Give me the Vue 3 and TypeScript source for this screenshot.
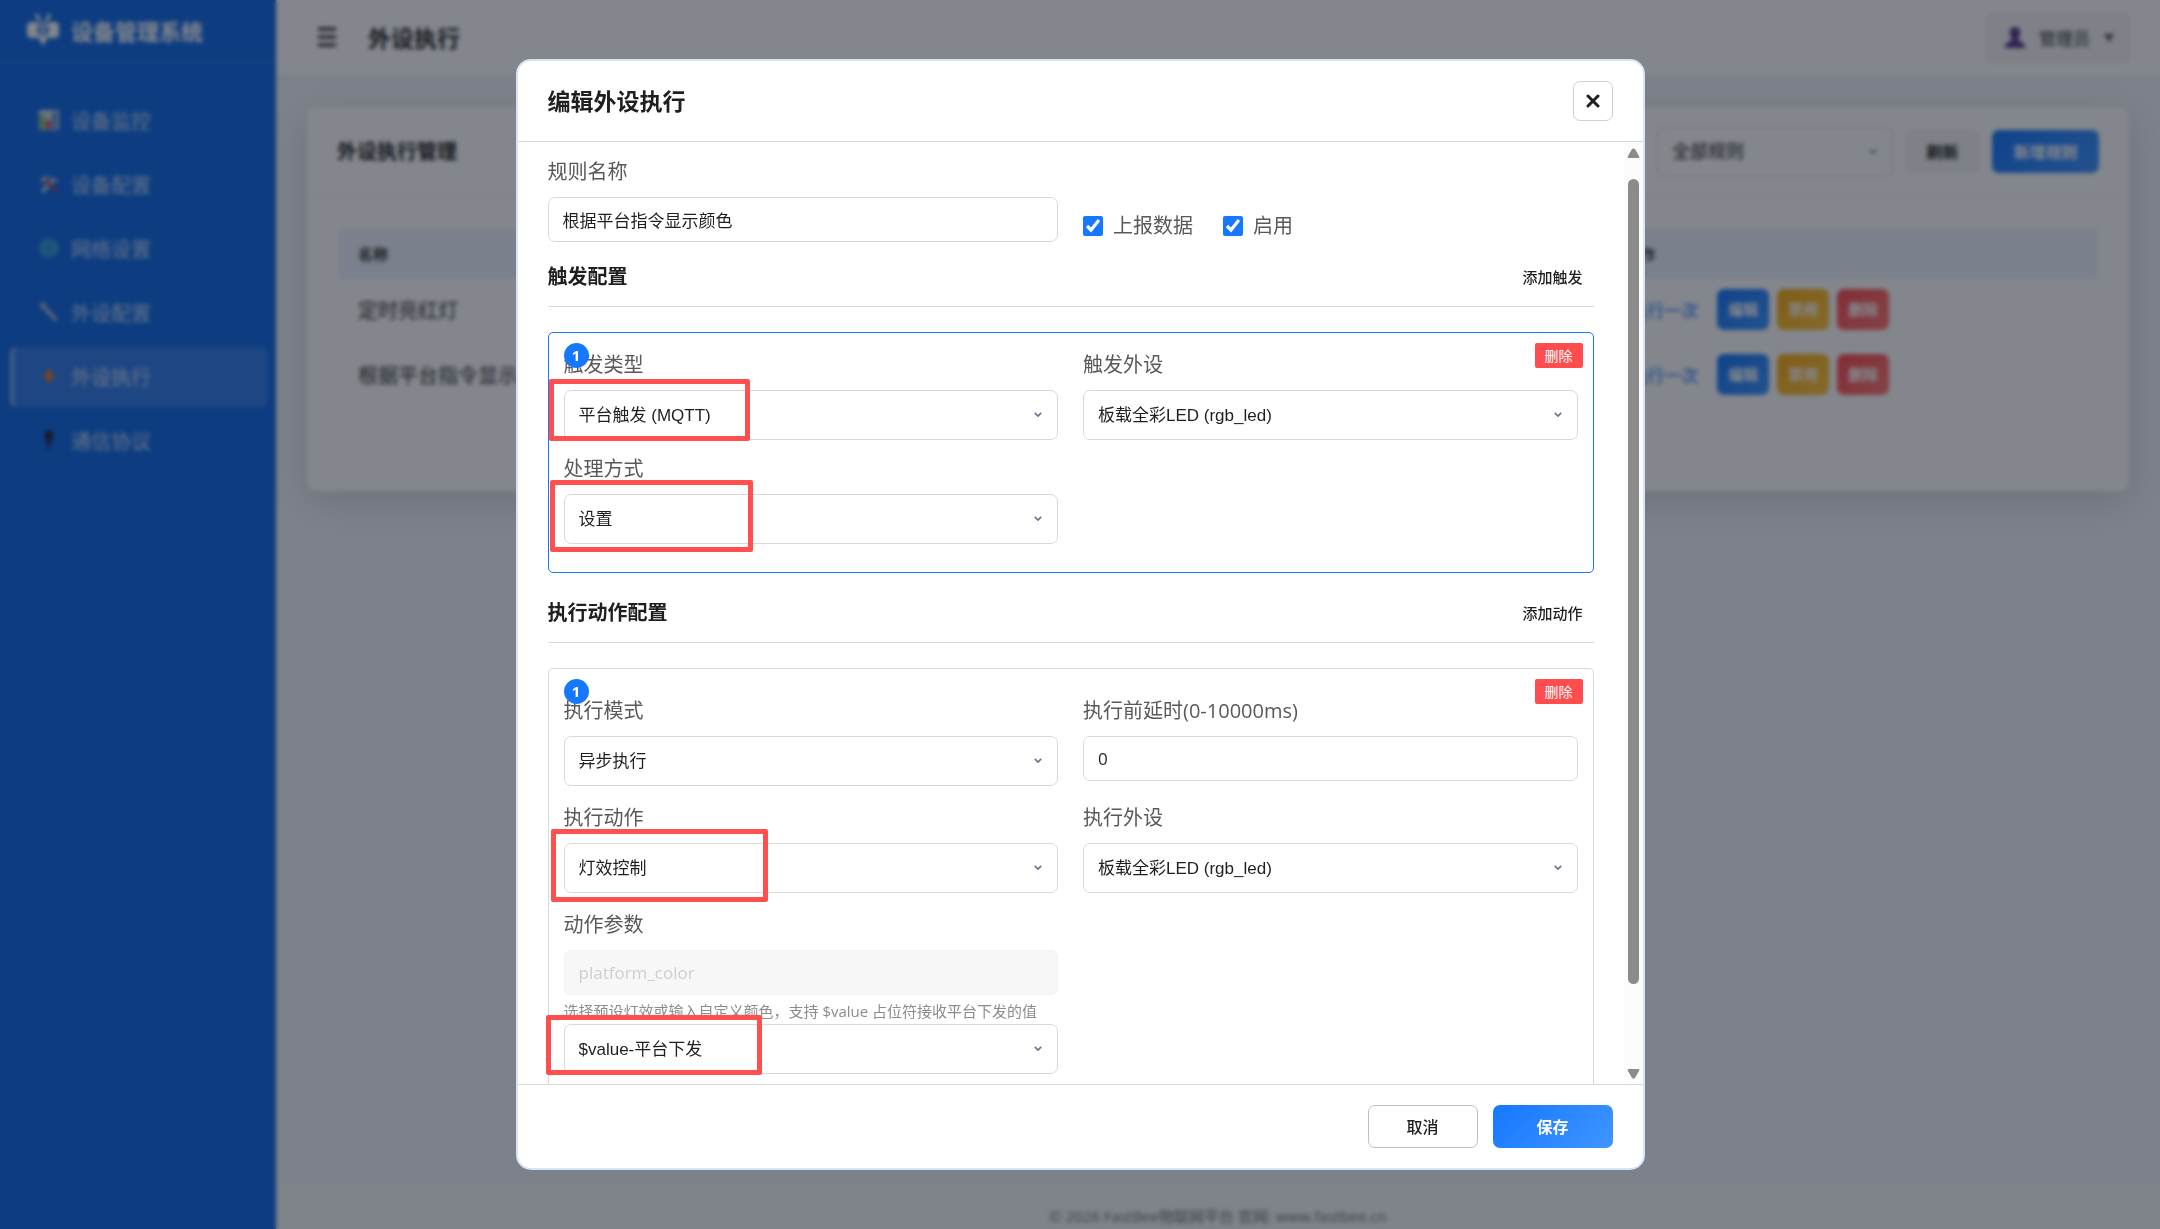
<script setup lang="ts">
import { ref } from 'vue'

interface MenuItem {
  key: string
  label: string
}

const menu: MenuItem[] = [
  { key: 'monitor', label: '设备监控' },
  { key: 'device', label: '设备配置' },
  { key: 'network', label: '网络设置' },
  { key: 'periph', label: '外设配置' },
  { key: 'exec', label: '外设执行' },
  { key: 'protocol', label: '通信协议' },
]
const activeKey = ref('exec')

const rules = ref([
  { id: 1, name: '定时亮红灯' },
  { id: 2, name: '根据平台指令显示颜色' },
])

const filter = ref('全部规则')
const ruleName = ref('根据平台指令显示颜色')
const reportData = ref(true)
const enabled = ref(true)
const triggerType = ref('平台触发 (MQTT)')
const triggerDevice = ref('板载全彩LED (rgb_led)')
const handleMode = ref('设置')
const execMode = ref('异步执行')
const delayMs = ref('0')
const actionType = ref('灯效控制')
const actionDevice = ref('板载全彩LED (rgb_led)')
const actionParam = ref('platform_color')
const actionValue = ref('$value-平台下发')
</script>

<template>
  <div class="app">
    <aside class="sidebar">
      <div class="brand">
        <svg class="brand-icon" viewBox="0 0 32 34" aria-hidden="true">
          <path d="M9 1l4 7M23 1l-4 7" stroke="#fff" stroke-width="3" fill="none" />
          <path d="M0 14q0-5 4-5h5l2 2q5-4 10 0l2-2h5q4 0 4 5v6q0 5-4 5h-5l-2-1-5 9-5-9-2 1H4q-4 0-4-5z" fill="#fff" />
          <circle cx="16" cy="17" r="5" fill="none" stroke="#1268e2" stroke-width="2" />
          <path d="M12 17h8" stroke="#1268e2" stroke-width="2" />
        </svg>
        <span>设备管理系统</span>
      </div>
      <nav class="menu">
        <a
          v-for="item in menu"
          :key="item.key"
          href="#"
          class="menu-item"
          :class="{ active: item.key === activeKey }"
          @click.prevent="activeKey = item.key"
        >
          <svg class="menu-icon" viewBox="0 0 20 20" aria-hidden="true">
            <template v-if="item.key === 'monitor'">
              <rect width="20" height="20" rx="1" fill="#d6dce4" />
              <rect x="1" y="5" width="5" height="14" fill="#6fc26a" />
              <rect x="7" y="10" width="5" height="9" fill="#e0436a" />
              <rect x="13" y="2" width="5" height="17" fill="#4f96d8" />
            </template>
            <template v-else-if="item.key === 'device'">
              <path d="M3 18L15 5" stroke="#c5ccd8" stroke-width="4" />
              <path d="M5 5l13 13" stroke="#b5484f" stroke-width="3" />
              <path d="M1 6l6-5 3 3-6 5z" fill="#b3bac6" />
              <path d="M12 3l3 4 4-1" stroke="#c5ccd8" stroke-width="2" fill="none" />
            </template>
            <template v-else-if="item.key === 'network'">
              <circle cx="10" cy="10" r="10" fill="#35a4e0" />
              <path d="M0 10h20M10 0v20M3 4q7 5 14 0M3 16q7-5 14 0" stroke="#2a83c8" fill="none" />
            </template>
            <template v-else-if="item.key === 'periph'">
              <path d="M4 4l12 13" stroke="#b6bfd0" stroke-width="4" stroke-linecap="round" />
              <path d="M1 5l5-4" stroke="#b6bfd0" stroke-width="3" />
            </template>
            <template v-else-if="item.key === 'exec'">
              <path d="M11 0L4 12h5l-1 8 8-12h-5z" fill="#ff7a1a" />
            </template>
            <template v-else>
              <path d="M6 1h8v7l-2 5h-1v7H9v-7H8L6 8z" fill="#2a2440" />
            </template>
          </svg>
          <span>{{ item.label }}</span>
        </a>
      </nav>
    </aside>

    <div class="main">
      <header class="topbar">
        <button class="burger" type="button" aria-label="菜单">
          <svg viewBox="0 0 18 22" width="18" height="22" aria-hidden="true">
            <path d="M0 3h18M0 11h18M0 19h18" stroke="#222" stroke-width="3" />
          </svg>
        </button>
        <h1>外设执行</h1>
        <button class="user" type="button">
          <svg viewBox="0 0 20 22" width="20" height="22" aria-hidden="true">
            <path d="M10 0c4 0 6 3 5 7q-1 4-2 6l5 3q2 1 2 5H0q0-4 2-5l5-3q-1-2-2-6c-1-4 1-7 5-7z" fill="#5b3a8e" />
          </svg>
          <span>管理员</span>
          <svg viewBox="0 0 10 8" width="10" height="8" aria-hidden="true"><path d="M0 0h10L5 8z" fill="#555" /></svg>
        </button>
      </header>

      <section class="card">
        <div class="card-head">
          <h2>外设执行管理</h2>
          <div class="card-tools">
            <div class="filter">
              <select v-model="filter" aria-label="规则筛选">
                <option>全部规则</option>
              </select>
              <svg class="chevron" viewBox="0 0 10 6" aria-hidden="true"><path d="M1 1l4 4 4-4" /></svg>
            </div>
            <button class="btn-refresh" type="button">刷新</button>
            <button class="btn-new" type="button">新增规则</button>
          </div>
        </div>
        <table class="rules">
          <thead>
            <tr>
              <th>名称</th>
              <th class="col-ops">操作</th>
            </tr>
          </thead>
          <tbody>
            <tr v-for="rule in rules" :key="rule.id">
              <td>{{ rule.name }}</td>
              <td>
                <div class="ops">
                  <button class="op-link" type="button">执行一次</button>
                  <button class="op op-edit" type="button">编辑</button>
                  <button class="op op-stop" type="button">禁用</button>
                  <button class="op op-del" type="button">删除</button>
                </div>
              </td>
            </tr>
          </tbody>
        </table>
      </section>

      <footer class="page-foot">© 2026 FastBee物联网平台 官网: www.fastbee.cn</footer>
    </div>

    <div class="overlay">
      <div class="modal" role="dialog" aria-labelledby="modal-title">
        <div class="modal-head">
          <h2 id="modal-title">编辑外设执行</h2>
          <button class="close" type="button" aria-label="关闭">
            <svg viewBox="0 0 14 14" width="14" height="14" aria-hidden="true">
              <path d="M2 2l10 10M12 2L2 12" stroke="#1f1f1f" stroke-width="3" stroke-linecap="round" />
            </svg>
          </button>
        </div>

        <div class="modal-mid">
          <form class="modal-body" @submit.prevent>
            <div class="grid">
              <div class="field">
                <label for="rule-name">规则名称</label>
                <input id="rule-name" v-model="ruleName" class="input" type="text" />
              </div>
              <div class="checks">
                <label class="check"><input v-model="reportData" type="checkbox" />上报数据</label>
                <label class="check"><input v-model="enabled" type="checkbox" />启用</label>
              </div>
            </div>

            <div class="section-head first">
              <h3>触发配置</h3>
              <button type="button">添加触发</button>
            </div>
            <div class="group active">
              <span class="badge">1</span>
              <button class="remove" type="button">删除</button>
              <div class="grid">
                <div class="field">
                  <label for="trigger-type">触发类型</label>
                  <div class="control">
                    <select id="trigger-type" v-model="triggerType"><option>平台触发 (MQTT)</option></select>
                    <svg class="chevron" viewBox="0 0 10 6" aria-hidden="true"><path d="M1 1l4 4 4-4" /></svg>
                    <span class="mark mark-type"></span>
                  </div>
                </div>
                <div class="field">
                  <label for="trigger-device">触发外设</label>
                  <div class="control">
                    <select id="trigger-device" v-model="triggerDevice"><option>板载全彩LED (rgb_led)</option></select>
                    <svg class="chevron" viewBox="0 0 10 6" aria-hidden="true"><path d="M1 1l4 4 4-4" /></svg>
                  </div>
                </div>
                <div class="field">
                  <label for="handle-mode">处理方式</label>
                  <div class="control">
                    <select id="handle-mode" v-model="handleMode"><option>设置</option></select>
                    <svg class="chevron" viewBox="0 0 10 6" aria-hidden="true"><path d="M1 1l4 4 4-4" /></svg>
                    <span class="mark mark-mode"></span>
                  </div>
                </div>
              </div>
            </div>

            <div class="section-head">
              <h3>执行动作配置</h3>
              <button type="button">添加动作</button>
            </div>
            <div class="group roomy">
              <span class="badge">1</span>
              <button class="remove" type="button">删除</button>
              <div class="grid">
                <div class="field">
                  <label for="exec-mode">执行模式</label>
                  <div class="control">
                    <select id="exec-mode" v-model="execMode"><option>异步执行</option></select>
                    <svg class="chevron" viewBox="0 0 10 6" aria-hidden="true"><path d="M1 1l4 4 4-4" /></svg>
                  </div>
                </div>
                <div class="field">
                  <label for="delay">执行前延时(0-10000ms)</label>
                  <input id="delay" v-model="delayMs" class="input" type="text" inputmode="numeric" />
                </div>
                <div class="field">
                  <label for="action-type">执行动作</label>
                  <div class="control">
                    <select id="action-type" v-model="actionType"><option>灯效控制</option></select>
                    <svg class="chevron" viewBox="0 0 10 6" aria-hidden="true"><path d="M1 1l4 4 4-4" /></svg>
                    <span class="mark mark-action"></span>
                  </div>
                </div>
                <div class="field">
                  <label for="action-device">执行外设</label>
                  <div class="control">
                    <select id="action-device" v-model="actionDevice"><option>板载全彩LED (rgb_led)</option></select>
                    <svg class="chevron" viewBox="0 0 10 6" aria-hidden="true"><path d="M1 1l4 4 4-4" /></svg>
                  </div>
                </div>
                <div class="field">
                  <label for="action-param">动作参数</label>
                  <input id="action-param" v-model="actionParam" class="input" type="text" disabled />
                  <p class="hint">选择预设灯效或输入自定义颜色，支持 $value 占位符接收平台下发的值</p>
                  <div class="control">
                    <select v-model="actionValue" aria-label="动作参数预设"><option>$value-平台下发</option></select>
                    <svg class="chevron" viewBox="0 0 10 6" aria-hidden="true"><path d="M1 1l4 4 4-4" /></svg>
                    <span class="mark mark-value"></span>
                  </div>
                </div>
              </div>
            </div>
          </form>
          <div class="scrollbar" aria-hidden="true">
            <svg viewBox="0 0 13 10" width="13" height="10"><path d="M5 1q1-1 3 0l4 7q1 2-1 2H2q-2 0-1-2z" fill="#8b8b8b" /></svg>
            <div class="track"><div class="thumb"></div></div>
            <svg viewBox="0 0 13 10" width="13" height="10"><path d="M5 9q1 1 3 0l4-7q1-2-1-2H2Q0 0 1 2z" fill="#8b8b8b" /></svg>
          </div>
        </div>

        <div class="modal-foot">
          <button class="cancel" type="button">取消</button>
          <button class="save" type="button">保存</button>
        </div>
      </div>
    </div>
  </div>
</template>

<style>
body {
  margin: 0;
  overflow: hidden;
}
</style>

<style scoped>
.app,
.app * {
  box-sizing: border-box;
}
.app {
  display: flex;
  height: 100vh;
  font-family: 'Open Sans', 'Noto Sans CJK SC', sans-serif;
  color: #1f1f1f;
}
h1,
h2,
h3,
p {
  margin: 0;
}
button {
  padding: 0 0 2px;
  border: 0;
  background: none;
  font-family: inherit;
  color: inherit;
}
select,
.input {
  width: 100%;
  border: 1px solid #d9d9d9;
  border-radius: 7px;
  background: #fff;
  color: #1f1f1f;
  font-size: 17px;
  outline: none;
}
select {
  display: block;
  appearance: none;
  height: 50px;
  padding: 0 40px 0 14px;
  font-family: 'Liberation Sans', 'Noto Sans CJK SC', sans-serif;
}
.chevron {
  position: absolute;
  top: 22px;
  right: 16px;
  width: 8px;
  height: 5px;
  fill: none;
  stroke: #64748b;
  stroke-width: 2;
  pointer-events: none;
}

/* sidebar */
.sidebar {
  flex: none;
  width: 276px;
  background: #126be8;
  color: #fff;
}
.brand {
  display: flex;
  align-items: center;
  gap: 12px;
  height: 62px;
  padding: 0 0 2px 27px;
  border-bottom: 1px solid rgba(255, 255, 255, 0.12);
  font-size: 22px;
  font-weight: 700;
}
.brand-icon {
  width: 32px;
  height: 34px;
}
.menu {
  display: flex;
  flex-direction: column;
  gap: 4px;
  padding: 29px 8px 0 10px;
}
.menu-item {
  display: flex;
  align-items: center;
  gap: 12px;
  height: 60px;
  padding: 0 0 2px 25px;
  border-left: 4px solid transparent;
  border-radius: 7px;
  color: rgba(255, 255, 255, 0.75);
  font-size: 20px;
  text-decoration: none;
}
.menu-item.active {
  border-left-color: rgba(255, 255, 255, 0.4);
  background: rgba(255, 255, 255, 0.14);
}
.menu-icon {
  width: 20px;
  height: 20px;
}

/* page */
.main {
  flex: 1;
  display: flex;
  flex-direction: column;
  min-width: 0;
  background: #f3f5f9;
}
.topbar {
  display: flex;
  align-items: center;
  height: 75px;
  padding: 0 30px 0 42px;
  background: #fff;
  box-shadow: 0 2px 10px rgba(0, 0, 0, 0.04);
}
.burger {
  display: flex;
}
.topbar h1 {
  flex: 1;
  margin-left: 32px;
  padding-bottom: 2px;
  font-size: 23px;
}
.user {
  display: flex;
  align-items: center;
  gap: 14px;
  height: 50px;
  padding: 0 15px 0 18px;
  border: 1px solid #e8e8ec;
  border-radius: 5px;
  background: #f4f4f6;
  font-size: 17px;
  color: #333;
}
.card {
  margin: 32px 31px 0;
  padding-bottom: 84px;
  border-radius: 10px;
  background: #fff;
  box-shadow: 0 10px 40px rgba(0, 0, 0, 0.14);
}
.card-head {
  display: flex;
  align-items: center;
  justify-content: space-between;
  height: 90px;
  padding: 0 30px;
  border-bottom: 1px solid #f0f0f0;
}
.card-head h2 {
  padding-bottom: 2px;
  font-size: 20px;
}
.card-tools {
  display: flex;
  align-items: center;
  gap: 12px;
}
.filter {
  position: relative;
  width: 236px;
}
.filter select {
  font-size: 18px;
}
.btn-refresh,
.btn-new {
  height: 43px;
  border-radius: 7px;
  font-size: 16px;
  font-weight: 600;
}
.btn-refresh {
  width: 75px;
  background: #f4f4f6;
}
.btn-new {
  width: 107px;
  background: linear-gradient(135deg, #1677ff, #4096ff);
  color: #fff;
}
.rules {
  width: calc(100% - 62px);
  margin: 32px 31px 0;
  border-collapse: collapse;
  text-align: left;
  font-size: 20px;
  color: #333;
}
.rules th {
  height: 50px;
  padding: 0 20px 2px;
  background: #eef4ff;
  font-size: 15px;
}
.rules td {
  height: 64px;
  padding: 0 20px 2px;
}
.rules tbody tr:first-child td {
  border-bottom: 1px solid #f0f0f0;
}
.rules .col-ops {
  width: 28%;
}
.ops {
  display: flex;
  align-items: center;
  gap: 8px;
}
.op-link {
  padding: 0 11px 0 5px;
  font-size: 17px;
  color: #1677ff;
}
.op {
  width: 52px;
  height: 41px;
  border-radius: 7px;
  font-size: 15px;
  font-weight: 600;
  color: #fff;
}
.op-edit {
  background: linear-gradient(135deg, #1677ff, #4096ff);
}
.op-stop {
  background: linear-gradient(135deg, #faad14, #ffc53d);
}
.op-del {
  background: linear-gradient(135deg, #ff4d4f, #ff7875);
}
.page-foot {
  margin-top: auto;
  padding: 20px 0 1px;
  background: #f7f8fb;
  line-height: 24px;
  text-align: center;
  font-size: 15px;
  color: #777;
}

/* dialog */
.overlay {
  position: fixed;
  inset: 0;
  display: flex;
  justify-content: center;
  padding: 59px 0;
  background: rgba(8, 14, 26, 0.5);
  backdrop-filter: blur(2px);
}
.modal {
  display: flex;
  flex-direction: column;
  width: 90%;
  max-width: 1129px;
  overflow: hidden;
  border: 2px solid #d6e4fb;
  border-radius: 15px;
  background: #fff;
}
.modal-head {
  flex: none;
  display: flex;
  align-items: center;
  justify-content: space-between;
  height: 81px;
  padding: 0 30px;
  border-bottom: 1px solid #d9d9d9;
}
.modal-head h2 {
  padding-bottom: 2px;
  font-size: 23px;
}
.close {
  display: flex;
  align-items: center;
  justify-content: center;
  width: 40px;
  height: 40px;
  padding: 0;
  border: 1px solid #d0d0d0;
  border-radius: 7px;
}
.modal-mid {
  flex: 1;
  display: flex;
  min-height: 0;
}
.modal-body {
  flex: 1;
  min-width: 0;
  overflow: hidden;
  padding: 15px 30px 0;
}
.scrollbar {
  flex: none;
  display: flex;
  flex-direction: column;
  align-items: center;
  width: 19px;
  padding: 6px 0 5px;
  background: #fcfcfc;
}
.scrollbar svg {
  flex: none;
}
.track {
  flex: 1;
  display: flex;
  width: 11px;
  padding: 21px 0 85px;
}
.thumb {
  flex: 1;
  border-radius: 6px;
  background: #8b8b8b;
}
.grid {
  display: grid;
  grid-template-columns: 1fr 1fr;
  gap: 13px 25px;
}
.field label {
  display: block;
  margin-bottom: 10px;
  line-height: 30px;
  font-size: 20px;
  color: #595959;
}
.input {
  display: block;
  height: 45px;
  padding: 0 14px;
  font-family: inherit;
}
.input:disabled {
  border-color: #f2f2f2;
  background: #f7f7f7;
  color: #cfcfcf;
}
.checks {
  display: flex;
  align-items: flex-end;
  gap: 30px;
}
.check {
  display: flex;
  align-items: center;
  gap: 10px;
  line-height: 32px;
  font-size: 20px;
  color: #595959;
}
.check input {
  width: 20px;
  height: 20px;
  margin: 0;
  accent-color: #1677ff;
}
.section-head {
  display: flex;
  align-items: center;
  justify-content: space-between;
  margin: 25px 0;
  padding: 0 11px 14px 0;
  border-bottom: 1px solid #d9d9d9;
}
.section-head.first {
  margin-top: 20px;
}
.section-head h3 {
  line-height: 30px;
  font-size: 20px;
}
.section-head button {
  font-size: 15px;
  font-weight: 500;
}
.group {
  position: relative;
  padding: 17px 15px 28px;
  border: 1px solid #d9d9d9;
  border-radius: 5px;
}
.group.active {
  border-color: #1677ff;
}
.group.roomy {
  padding-top: 27px;
}
.group .grid {
  row-gap: 14px;
}
.group.roomy .grid {
  row-gap: 17px;
}
.badge {
  position: absolute;
  top: 10px;
  left: 15px;
  width: 25px;
  height: 25px;
  border-radius: 50%;
  background: #1677ff;
  color: #fff;
  font-size: 15px;
  font-weight: 700;
  line-height: 24px;
  text-align: center;
}
.remove {
  position: absolute;
  top: 10px;
  right: 10px;
  width: 48px;
  height: 25px;
  border-radius: 2px;
  background: #ff4d4f;
  color: #fff;
  font-size: 14px;
}
.control {
  position: relative;
}
.hint {
  margin: 5px 0 2px;
  line-height: 22px;
  font-size: 15px;
  color: #8c8c8c;
  white-space: nowrap;
}

/* red annotation frames */
.mark {
  position: absolute;
  border: 5px solid #ff5050;
  border-radius: 2px;
  pointer-events: none;
}
.mark-type {
  top: -11px;
  left: -15px;
  width: 201px;
  height: 62px;
}
.mark-mode {
  top: -14px;
  left: -14px;
  width: 203px;
  height: 72px;
}
.mark-action {
  top: -14px;
  left: -13px;
  width: 217px;
  height: 73px;
}
.mark-value {
  top: -9px;
  left: -18px;
  width: 216px;
  height: 60px;
}
.modal-foot {
  flex: none;
  display: flex;
  align-items: center;
  justify-content: flex-end;
  gap: 15px;
  height: 84px;
  padding: 0 30px;
  border-top: 1px solid #d9d9d9;
}
.modal-foot button {
  height: 43px;
  border-radius: 7px;
  font-size: 16px;
  font-weight: 500;
}
.modal-foot .cancel {
  width: 110px;
  border: 1px solid #bfbfbf;
}
.modal-foot .save {
  width: 120px;
  background: linear-gradient(135deg, #1677ff, #4096ff);
  color: #fff;
  font-weight: 600;
}
</style>
